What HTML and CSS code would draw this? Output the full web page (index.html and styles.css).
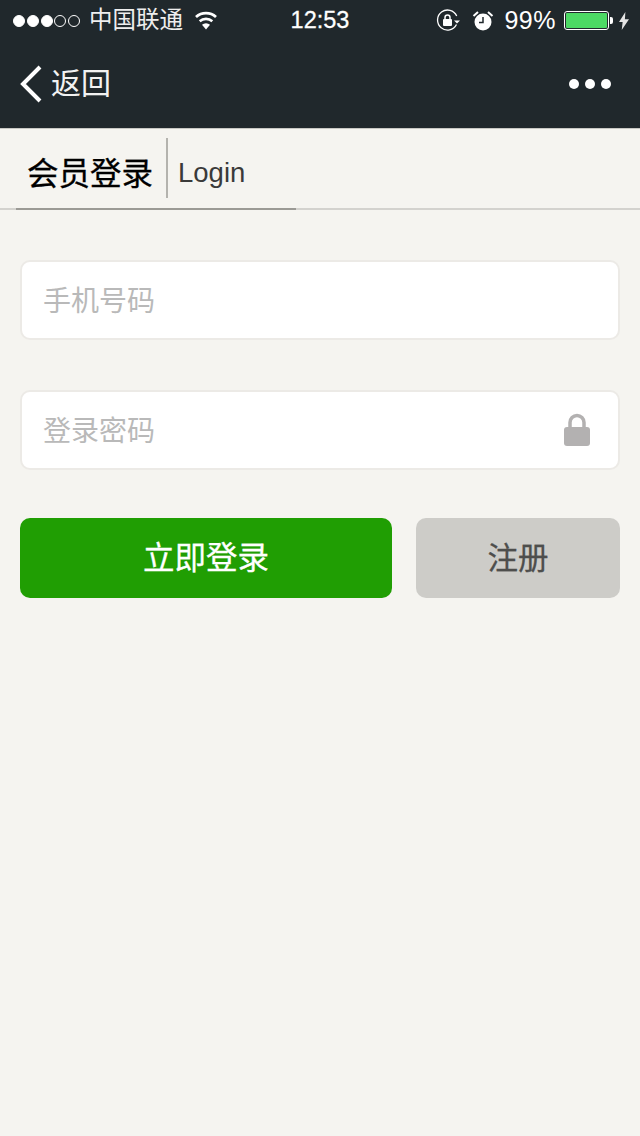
FILE: index.html
```html
<!DOCTYPE html>
<html lang="zh-CN">
<head>
<meta charset="utf-8">
<title>会员登录</title>
<link rel="stylesheet" href="styles.css">
</head>
<body>
<header class="appbar">
  <div class="status">
    <div class="status-left">
      <span class="dots"><i class="dot on"></i><i class="dot on"></i><i class="dot on"></i><i class="dot"></i><i class="dot"></i></span>
      <span class="carrier">中国联通</span>
      <svg class="wifi" width="24" height="20" viewBox="0 0 24 20"><path d="M12 19.500l-4-4.700a6 6 0 0 1 8 0z" fill="#fff"/><path d="M5.700 11.300a9.500 9.500 0 0 1 12.600 0" fill="none" stroke="#fff" stroke-width="2.600"/><path d="M2 7a15 15 0 0 1 20 0" fill="none" stroke="#fff" stroke-width="2.800"/></svg>
    </div>
    <span class="time">12:53</span>
    <div class="status-right">
      <svg class="rot" width="24" height="24" viewBox="0 0 24 24"><path d="M20.500 15.500A10 10 0 1 1 20.700 7" fill="none" stroke="#fff" stroke-width="1.300"/><path d="M18 11.500h6l-3 3z" fill="#fff"/><rect x="7" y="10" width="9" height="7" rx="1" fill="#fff"/><path d="M9 10.500V8.500a2.500 2.500 0 0 1 5 0v2" fill="none" stroke="#fff" stroke-width="1.500"/></svg>
      <svg class="alarm" width="22" height="22" viewBox="0 0 22 22"><circle cx="11" cy="12" r="8.500" fill="#fff"/><path d="M11 7v5.500H7" fill="none" stroke="#20282c" stroke-width="1.500"/><path d="M1.500 6L6 2M20.500 6L16 2" stroke="#fff" stroke-width="2"/></svg>
      <span class="pct">99%</span>
      <div class="battery"><div class="level"></div></div>
      <i class="nub"></i>
      <svg class="bolt" width="10" height="20" viewBox="0 0 11 20"><path d="M7 0L0 11h4l-1 9 8-12H6.500z" fill="#e4e4e4"/></svg>
    </div>
  </div>
  <nav class="nav">
    <div class="back">
      <svg class="chev" width="24" height="38" viewBox="0 0 24 38"><path d="M21 2L4 19l17 17" fill="none" stroke="#fff" stroke-width="4"/></svg>
      <span class="back-text">返回</span>
    </div>
    <div class="more"><i></i><i></i><i></i></div>
  </nav>
</header>
<main class="page">
  <div class="title-rule">
    <div class="title-wrap">
      <span class="title-cn">会员登录</span>
      <span class="title-en">Login</span>
    </div>
  </div>
  <form class="form">
    <div class="field"><span class="ph">手机号码</span></div>
    <div class="field"><span class="ph">登录密码</span>
      <svg class="lock" width="28" height="33" viewBox="0 0 28 33"><path d="M7 16V9.500a7 7 0 0 1 14 0V16" fill="none" stroke="#b3b1b1" stroke-width="3.500"/><rect x="1" y="14" width="26" height="19" rx="3" fill="#b3b1b1"/></svg>
    </div>
    <div class="actions">
      <div class="btn primary">立即登录</div>
      <div class="btn secondary">注册</div>
    </div>
  </form>
</main>
</body>
</html>
```
FILE: styles.css
```css
* { box-sizing: border-box; }
html, body { margin: 0; height: 100%; }
body { width: 640px; height: 1136px; overflow: hidden; background: #f5f4f0; font-family: "Liberation Sans", "Noto Sans CJK SC", sans-serif; display: flex; flex-direction: column; }
.appbar { height: 129px; background: #20282c; border-bottom: 1px solid #c8c8c4; color: #fff; flex: none; }
.status { height: 40px; display: grid; grid-template-columns: 1fr auto 1fr; align-items: center; padding: 1px 11px 0 13px; }
.status-left { display: flex; align-items: center; }
.dots { display: flex; gap: 1.750px; }
.dot { width: 12px; height: 12px; border-radius: 50%; border: 1px solid #fff; }
.dot.on { background: #fff; }
.carrier { font-size: 23.500px; margin-left: 9px; color: #eee; line-height: 28px; padding-bottom: 2px; }
.wifi { margin-left: 11px; margin-top: -2px; }
.time { font-size: 23.500px; -webkit-text-stroke: 0.3px #fff; margin-left: -2px; }
.status-right { display: flex; align-items: center; justify-content: flex-end; }
.rot { margin-right: 12px; }
.alarm { margin-right: 10px; }
.pct { font-size: 25px; margin-right: 8px; letter-spacing: 0.5px; }
.battery { width: 45px; height: 19px; border: 1px solid #fff; border-radius: 3px; padding: 1px; }
.level { height: 100%; background: #4cd964; border-radius: 1px; }
.nub { width: 3px; height: 7px; background: #fff; border-radius: 0 2px 2px 0; margin-left: 1px; }
.bolt { margin-left: 6px; }
.nav { height: 88px; display: flex; align-items: center; justify-content: space-between; padding: 0 29px 4px 19px; }
.back { display: flex; align-items: center; }
.chev { margin-top: 3px; }
.back-text { font-size: 30px; margin-left: 8px; color: #f2f2f2; line-height: 40px; padding-top: 3px; }
.more { display: flex; gap: 5.500px; margin-top: 4px; }
.more i { width: 10.500px; height: 10.500px; border-radius: 50%; background: #fff; }
.page { flex: 1; }
.title-rule { height: 81px; border-bottom: 2px solid #d3d2ce; padding: 9px 0 0 16px; }
.title-wrap { width: 280px; height: 72px; border-bottom: 2px solid #9b9a95; display: flex; align-items: flex-start; margin-bottom: -2px; padding-left: 11px; }
.title-cn { font-size: 31.500px; color: #000; line-height: 60px; height: 60px; padding-right: 13px; border-right: 2px solid #b4b3ae; padding-top: 6px; -webkit-text-stroke: 0.3px #000; }
.title-en { font-size: 27.500px; color: #3a3a3a; line-height: 60px; margin-left: 10px; padding-top: 5px; }
.form { padding: 50px 20px 0; display: flex; flex-direction: column; }
.field { height: 80px; margin-bottom: 50px; width: 600px; background: #fff; border: 2px solid #eceae6; border-radius: 10px; display: flex; align-items: center; justify-content: space-between; padding: 0 27px 0 21px; }
.ph { font-size: 28px; color: #b9b9b9; line-height: 40px; padding-top: 4px; }
.lock { margin-top: -2px; }
.actions { display: flex; justify-content: space-between; margin-top: -2px; }
.btn { height: 80px; border-radius: 10px; display: flex; align-items: center; justify-content: center; line-height: 44px; }
.primary { width: 372px; background: #209e03; color: #fff; font-size: 31.500px; -webkit-text-stroke: 0.3px #fff; }
.secondary { width: 204px; background: #cdccc8; color: #4e4e4c; font-size: 30.500px; -webkit-text-stroke: 0.3px #4e4e4c; }
```
